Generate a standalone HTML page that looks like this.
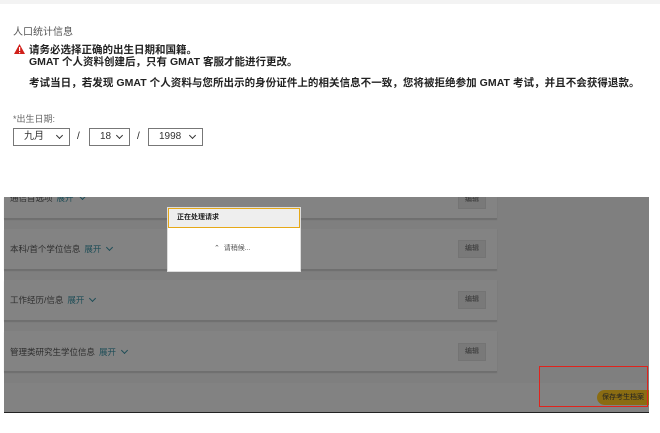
<!DOCTYPE html>
<html><head><meta charset="utf-8"><style>
body{margin:0;width:660px;height:433px;background:#fff;position:relative;overflow:hidden;font-family:"Liberation Sans","Noto Sans CJK SC",sans-serif;color:#222}
.a{position:absolute}
.sel{position:absolute;top:128px;height:18px;border:1px solid #777;box-sizing:border-box;font-size:10px;line-height:16px;padding-left:10px;color:#333}
.sel:after{content:"";position:absolute;right:7px;top:4px;width:4px;height:4px;border-right:1.5px solid #333;border-bottom:1.5px solid #333;transform:rotate(45deg)}
.card{position:absolute;left:4px;width:493px;background:#838383;border-bottom:1px solid #6f6f6f;box-shadow:0 1px 1px rgba(0,0,0,.15);overflow:hidden}
.ct{position:absolute;left:6px;font-size:8.5px;color:#2e2e2e;white-space:nowrap}
.ct span{color:#1e4d57;margin-left:4px}
.ct b{display:inline-block;width:4px;height:4px;border-right:1.5px solid #1e4d57;border-bottom:1.5px solid #1e4d57;transform:rotate(45deg);margin-left:6px;position:relative;top:-2px}
.ed{position:absolute;left:454px;width:26px;height:16px;background:#797979;border:1px solid #747474;font-size:7px;line-height:16px;text-align:center;color:#333}
</style></head><body>
<div class="a" style="left:0;top:0;width:660px;height:4px;background:#f3f3f3"></div>
<div class="a" style="left:13px;top:23px;font-size:10px;color:#555">人口统计信息</div>
<svg class="a" style="left:14px;top:44px" width="11" height="10"><path d="M5.5 0L11 10H0z" fill="#d0201a"/><rect x="5" y="3" width="1.2" height="4" fill="#fff"/><rect x="5" y="8" width="1.2" height="1.2" fill="#fff"/></svg>
<div class="a" style="left:29px;top:42px;font-size:10.5px;font-weight:bold;color:#222">请务必选择正确的出生日期和国籍。</div>
<div class="a" style="left:29px;top:54px;font-size:10.5px;font-weight:bold;color:#222">GMAT 个人资料创建后，只有 GMAT 客服才能进行更改。</div>
<div class="a" style="left:29px;top:75px;font-size:10.5px;font-weight:bold;color:#222;white-space:nowrap;letter-spacing:0.05px">考试当日，若发现 GMAT 个人资料与您所出示的身份证件上的相关信息不一致，您将被拒绝参加 GMAT 考试，并且不会获得退款。</div>
<div class="a" style="left:13px;top:112px;font-size:9px;color:#666">*出生日期:</div>
<div class="sel" style="left:13px;width:57px">九月</div>
<div class="a" style="left:77px;top:131px;font-size:10px">/</div>
<div class="sel" style="left:89px;width:41px">18</div>
<div class="a" style="left:137px;top:131px;font-size:10px">/</div>
<div class="sel" style="left:148px;width:55px">1998</div>

<div class="a" style="left:4px;top:197px;width:645px;height:215px;background:#7f7f7f"></div>
<div class="card" style="top:197px;height:21px"><div class="ct" style="top:-5px">通信首选项<span>展开</span><b></b></div><div class="ed" style="top:-6px">编辑</div></div>
<div class="card" style="top:229px;height:40px"><div class="ct" style="top:14px">本科/首个学位信息<span>展开</span><b></b></div><div class="ed" style="top:11px">编辑</div></div>
<div class="card" style="top:280px;height:40px"><div class="ct" style="top:14px">工作经历/信息<span>展开</span><b></b></div><div class="ed" style="top:11px">编辑</div></div>
<div class="card" style="top:331px;height:40px"><div class="ct" style="top:15px">管理类研究生学位信息<span>展开</span><b></b></div><div class="ed" style="top:12px">编辑</div></div>
<div class="a" style="left:4px;top:383px;width:645px;height:29px;background:#828282"></div>
<div class="a" style="left:4px;top:412px;width:645px;height:1px;background:#222"></div>

<div class="a" style="left:167px;top:207px;width:134px;height:65px;background:#fff;border:1px solid #ddd;box-sizing:border-box"></div>
<div class="a" style="left:168px;top:208px;width:132px;height:20px;background:#eee;border:1.5px solid #e6a817;box-sizing:border-box;font-size:7px;font-weight:bold;line-height:17px;padding-left:8px">正在处理请求</div>
<div class="a" style="left:214px;top:243px;font-size:7px;color:#555">⌃&nbsp;&nbsp;请稍候...</div>

<div class="a" style="left:597px;top:390px;width:58px;height:15px;background:#8a6c12;border-radius:8px;font-size:7px;line-height:15px;padding-left:5px;color:#222">保存考生档案</div>
<div class="a" style="left:539px;top:366px;width:109px;height:41px;border:1.5px solid #e0231c;box-sizing:border-box"></div>
<div class="a" style="left:649px;top:197px;width:11px;height:236px;background:#fff"></div>
</body></html>
